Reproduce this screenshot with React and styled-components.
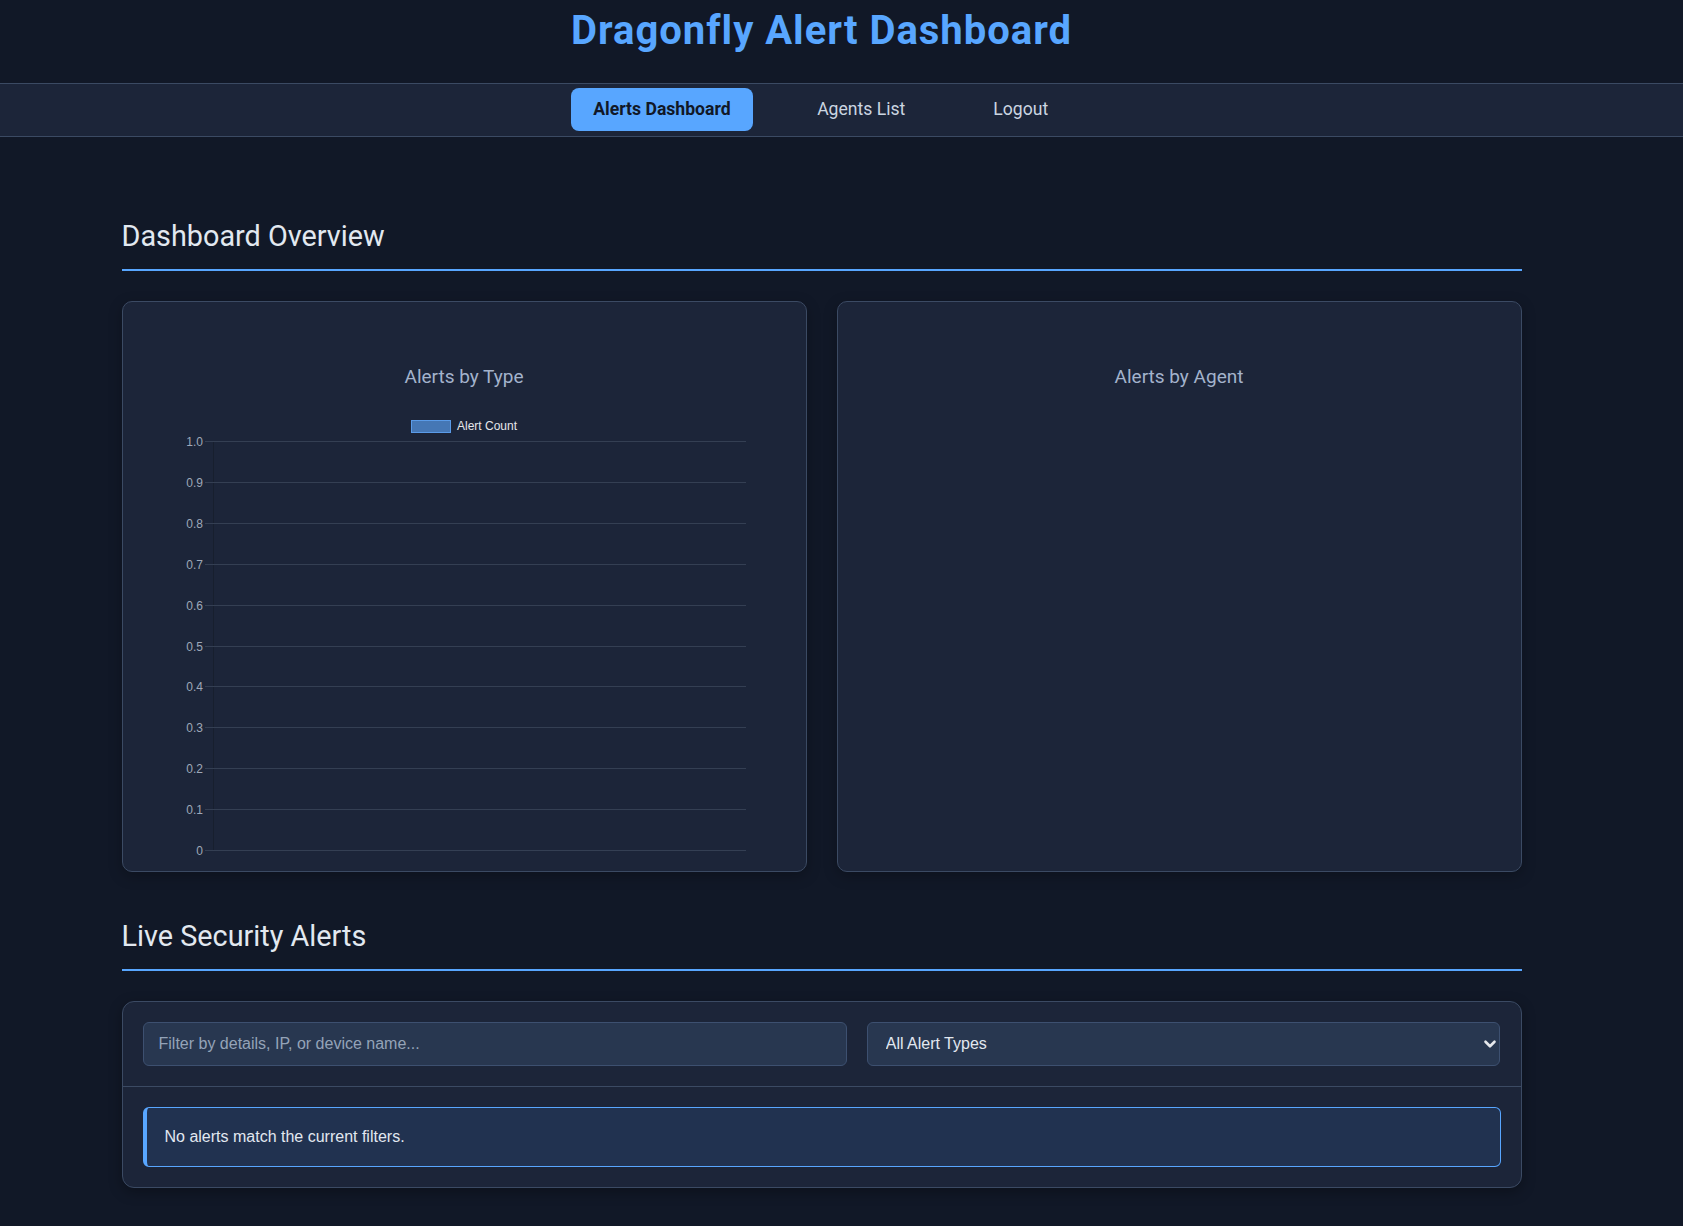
import styled, { createGlobalStyle } from 'styled-components';
import { ChevronDown } from 'lucide-react';

const GlobalStyle = createGlobalStyle`
    * {
        box-sizing: border-box;
    }
    body {
        margin: 0;
        background: #111827;
        font-family: Roboto, 'Liberation Sans', sans-serif;
        color: #e2e8f0;
    }
`;

const Inner = styled.div`
    width: 1400px;
    margin-left: calc(50% - 720px);
`;

const Header = styled.header`
    padding: 7px 0 29px;
`;

const Title = styled.h1`
    margin: 0;
    text-align: center;
    font-size: 40px;
    line-height: 47px;
    font-weight: 700;
    letter-spacing: 1px;
    color: #58a6ff;
`;

const NavBar = styled.nav`
    background: #1c2539;
    border-top: 1px solid #3b4a63;
    border-bottom: 1px solid #3b4a63;
    padding: 4px 0 5px;
`;

const NavList = styled.div`
    display: flex;
    justify-content: center;
    gap: 40px;
`;

const NavItem = styled.a`
    display: block;
    padding: 11.2px ${(p) => (p.$active ? '22.5px' : '24px')};
    border-radius: 8px;
    font-size: 17.6px;
    line-height: 20.6px;
    font-weight: ${(p) => (p.$active ? 700 : 400)};
    color: ${(p) => (p.$active ? '#111827' : '#cbd5e1')};
    background: ${(p) => (p.$active ? '#58a6ff' : 'transparent')};
    text-decoration: none;
    cursor: pointer;
`;

const Main = styled(Inner)`
    padding: 82px 0 40px;
`;

const Section = styled.section`
    & + & {
        margin-top: 47px;
    }
`;

const SectionTitle = styled.h2`
    margin: 0 0 30px;
    padding-bottom: 16px;
    border-bottom: 2px solid #58a6ff;
    font-size: 28.8px;
    line-height: 34px;
    font-weight: 400;
    color: #e2e8f0;
`;

const ChartGrid = styled.div`
    display: grid;
    grid-template-columns: 1fr 1fr;
    gap: 30px;
`;

const ChartCard = styled.div`
    height: 571px;
    padding: 63px 28px 0;
    background: #1c2539;
    border: 1px solid #3b4a63;
    border-radius: 10px;
    box-shadow: 0 4px 14px rgba(0, 0, 0, 0.25);
    display: flex;
    flex-direction: column;
`;

const ChartTitle = styled.div`
    text-align: center;
    font-size: 19px;
    line-height: 23px;
    color: #a3b3cc;
`;

const Legend = styled.div`
    margin-top: 32px;
    display: flex;
    justify-content: center;
    align-items: center;
    gap: 6px;
    height: 13px;
    font-family: 'Liberation Sans', Arial, sans-serif;
    font-size: 12px;
    color: #e5e7eb;
`;

const LegendSwatch = styled.span`
    width: 40px;
    height: 13px;
    background: #4577b5;
    border: 1px solid #5a9be8;
`;

const Plot = styled.svg`
    display: block;
    margin-top: 3px;
`;

const AlertsCard = styled.div`
    background: #1c2539;
    border: 1px solid #3b4a63;
    border-radius: 12px;
    box-shadow: 0 4px 14px rgba(0, 0, 0, 0.3);
`;

const FilterRow = styled.div`
    display: grid;
    grid-template-columns: minmax(0, 10fr) minmax(0, 9fr);
    gap: 20px;
    padding: 20px;
    border-bottom: 1px solid #3b4a63;
`;

const FilterInput = styled.input`
    width: 100%;
    padding: 12px 15px;
    font-family: 'Liberation Sans', Arial, sans-serif;
    font-size: 16px;
    line-height: 18px;
    color: #e2e8f0;
    background: #283750;
    border: 1px solid #3d5070;
    border-radius: 6px;
    outline: none;

    &::placeholder {
        color: #94a3b8;
    }
`;

const SelectWrap = styled.div`
    position: relative;
`;

const Select = styled.select`
    width: 100%;
    height: 44px;
    padding: 0 30px 0 18px;
    appearance: none;
    font-family: 'Liberation Sans', Arial, sans-serif;
    font-size: 16px;
    color: #e2e8f0;
    background: #283750;
    border: 1px solid #3d5070;
    border-radius: 6px;
    outline: none;
`;

const SelectArrow = styled(ChevronDown)`
    position: absolute;
    right: 1px;
    top: 50%;
    transform: translateY(-50%);
    color: #e5e7eb;
    pointer-events: none;
`;

const AlertList = styled.div`
    padding: 20px;
`;

const EmptyNotice = styled.div`
    padding: 20px 18px;
    background: #213250;
    border: 1px solid #58a6ff;
    border-left-width: 4px;
    border-radius: 6px;
    font-family: 'Liberation Sans', Arial, sans-serif;
    font-size: 16px;
    line-height: 18px;
    color: #e2e8f0;
`;

const ticks = ['1.0', '0.9', '0.8', '0.7', '0.6', '0.5', '0.4', '0.3', '0.2', '0.1', '0'];

const BarChart = () => (
    <Plot width="626" height="420" viewBox="0 0 626 420">
        <line x1="62.5" y1="5" x2="62.5" y2="414" stroke="#171f2e" />
        {ticks.map((t, i) => {
            const y = Math.round(5 + i * 40.9) + 0.5;
            return (
                <g key={t}>
                    <line x1="54" y1={y} x2="595" y2={y} stroke="#343f53" />
                    <text
                        x="52"
                        y={y + 4}
                        textAnchor="end"
                        fontFamily="'Liberation Sans', Arial, sans-serif"
                        fontSize="12"
                        fill="#9ea8b8"
                    >
                        {t}
                    </text>
                </g>
            );
        })}
    </Plot>
);

const App = () => {
    return (
        <>
            <GlobalStyle />
            <Header>
                <Inner>
                    <Title>Dragonfly Alert Dashboard</Title>
                </Inner>
            </Header>
            <NavBar>
                <Inner>
                    <NavList>
                        <NavItem $active>Alerts Dashboard</NavItem>
                        <NavItem>Agents List</NavItem>
                        <NavItem>Logout</NavItem>
                    </NavList>
                </Inner>
            </NavBar>
            <Main>
                <Section>
                    <SectionTitle>Dashboard Overview</SectionTitle>
                    <ChartGrid>
                        <ChartCard>
                            <ChartTitle>Alerts by Type</ChartTitle>
                            <Legend>
                                <LegendSwatch />
                                Alert Count
                            </Legend>
                            <BarChart />
                        </ChartCard>
                        <ChartCard>
                            <ChartTitle>Alerts by Agent</ChartTitle>
                        </ChartCard>
                    </ChartGrid>
                </Section>
                <Section>
                    <SectionTitle>Live Security Alerts</SectionTitle>
                    <AlertsCard>
                        <FilterRow>
                            <FilterInput placeholder="Filter by details, IP, or device name..." />
                            <SelectWrap>
                                <Select defaultValue="all">
                                    <option value="all">All Alert Types</option>
                                </Select>
                                <SelectArrow size={18} strokeWidth={3.5} />
                            </SelectWrap>
                        </FilterRow>
                        <AlertList>
                            <EmptyNotice>No alerts match the current filters.</EmptyNotice>
                        </AlertList>
                    </AlertsCard>
                </Section>
            </Main>
        </>
    );
};

export default App;
